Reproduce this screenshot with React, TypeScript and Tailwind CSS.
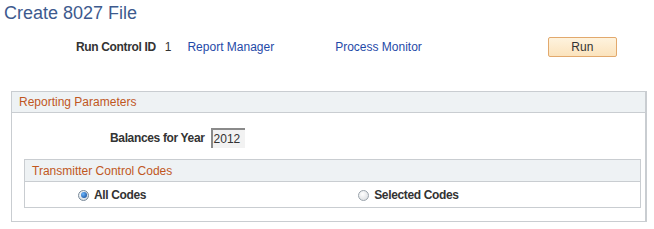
import React from 'react';

const font = { fontFamily: '"Liberation Sans", Arial, sans-serif' };

const Radio = ({ checked }: { checked: boolean }) => (
  <span
    className={
      checked
        ? 'inline-flex h-[11px] w-[11px] items-center justify-center rounded-full border border-[#7a8a99] bg-[radial-gradient(circle_at_40%_35%,#ffffff,#c9d3dc)]'
        : 'inline-block h-[11px] w-[11px] rounded-full border border-[#9aa3ab] bg-[radial-gradient(circle_at_40%_35%,#ffffff,#d6d9dc)]'
    }
  >
    {checked && (
      <span className="block h-[6px] w-[6px] rounded-full bg-[radial-gradient(circle_at_35%_35%,#6cb7ff,#0a3f8a)]" />
    )}
  </span>
);

export default function App() {
  return (
    <div className="h-[229px] w-[654px] bg-white text-[12px] text-[#333]" style={font}>
      <h1 className="pl-[4px] pt-[1px] text-[18px] leading-[24px] text-[#3d5a8e]">Create 8027 File</h1>

      <div className="mt-[11px] flex h-[22px] items-center">
        <span className="ml-[76px] font-bold tracking-[-0.35px]">Run Control ID</span>
        <span className="ml-[9px]">1</span>
        <a className="ml-[16px] text-[#1f4aa8]">Report Manager</a>
        <a className="ml-[61px] text-[#1f4aa8]">Process Monitor</a>
        <button className="ml-[126px] h-[20px] w-[69px] rounded-[2px] border border-[#e2a96d] bg-gradient-to-b from-[#fef3de] to-[#fbe3bd] text-[12px] text-[#333]">
          Run
        </button>
      </div>

      <div className="ml-[11px] mt-[33px] w-[636px] border border-r-2 border-[#c9cdd1]">
        <div className="flex h-[21px] items-center border-b border-[#c9cdd1] bg-[#eef2f4] pl-[7px] text-[#c0571e]">
          Reporting Parameters
        </div>
        <div className="flex h-[46px] items-center pt-[4px]">
          <span className="ml-[98px] font-bold tracking-[-0.35px]">Balances for Year</span>
          <span className="ml-[6px] flex h-[20px] w-[34px] items-center border-l-2 border-t-2 border-[#8a8a8a] bg-[#f2f2f2] pl-[1px] text-[12px]">
            2012
          </span>
        </div>
        <div className="ml-[12px] w-[617px] border border-[#c9cdd1]">
          <div className="flex h-[22px] items-center border-b border-[#c9cdd1] bg-[#eef2f4] pl-[7px] text-[#c0571e]">
            Transmitter Control Codes
          </div>
          <div className="flex h-[25px] items-center pt-[1px]">
            <span className="ml-[53px] flex items-center gap-[5px] font-bold tracking-[-0.35px]">
              <Radio checked />
              All Codes
            </span>
            <span className="ml-[212px] flex items-center gap-[5px] font-bold tracking-[-0.35px]">
              <Radio checked={false} />
              Selected Codes
            </span>
          </div>
        </div>
        <div className="h-[13px]" />
      </div>
    </div>
  );
}
